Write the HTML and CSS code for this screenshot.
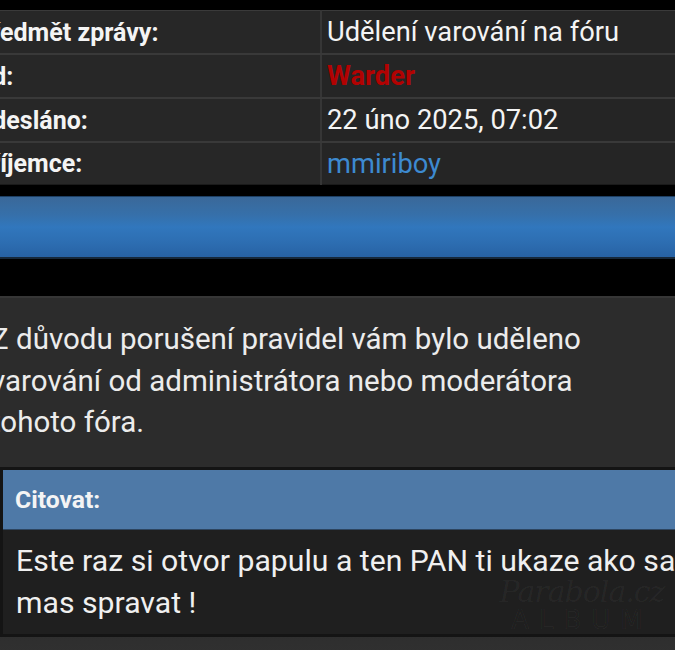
FILE: index.html
```html
<!DOCTYPE html>
<html lang="cs">
<head>
<meta charset="utf-8">
<title>Soukromá zpráva</title>
<link rel="stylesheet" href="styles.css">
</head>
<body>
<div class="page">
  <table class="pm-info">
    <tr>
      <th>Předmět zprávy:</th>
      <td>Udělení varování na fóru</td>
    </tr>
    <tr>
      <th>Od:</th>
      <td><span class="user-admin">Warder</span></td>
    </tr>
    <tr>
      <th>Odesláno:</th>
      <td>22 úno 2025, 07:02</td>
    </tr>
    <tr>
      <th>Příjemce:</th>
      <td><span class="user-link">mmiriboy</span></td>
    </tr>
  </table>

  <div class="cat-bar"></div>

  <div class="post">
    <p class="post-text">Z důvodu porušení pravidel vám bylo uděleno varování od administrátora nebo moderátora tohoto fóra.</p>
    <div class="quote">
      <div class="quote-head">Citovat:</div>
      <div class="quote-body">
        <p>Este raz si otvor papulu a ten PAN ti ukaze ako sa mas spravat !</p>
        <div class="watermark">
          <span class="wm-script">Parabola.cz</span>
          <span class="wm-album">ALBUM</span>
        </div>
      </div>
    </div>
  </div>
</div>
</body>
</html>
```

FILE: styles.css
```css
html, body {
  margin: 0;
  padding: 0;
  background: #000;
  overflow: hidden;
}

body {
  font-family: Roboto, "Liberation Sans", sans-serif;
  color: #f2f2f2;
}

.page {
  margin-left: -30px;
  width: 760px;
  padding-top: 10px;
}

.pm-info {
  width: 100%;
  border-collapse: collapse;
  border-top: 1px solid #3a3a3a;
}

.pm-info th,
.pm-info td {
  height: 42px;
  padding: 0;
  border-bottom: 2px solid #393939;
  background: #272727;
  vertical-align: middle;
  text-align: left;
}

.pm-info tr:last-child th,
.pm-info tr:last-child td {
  border-bottom: 1px solid #1a1a1a;
  height: 41px;
}

.pm-info th {
  width: 345px;
  padding-left: 5px;
  font-size: 25px;
  font-weight: 700;
  color: #f4f4f4;
  border-right: 2px solid #363636;
}

.pm-info td {
  padding-left: 5px;
  font-size: 27.3px;
  font-weight: 400;
  color: #f4f4f4;
  background: #252525;
}

.user-admin {
  color: #b20202;
  font-weight: 700;
}

.user-link {
  color: #3d8ad0;
}

.cat-bar {
  margin-top: 11px;
  height: 60px;
  border-top: 1px solid #1d3f63;
  border-bottom: 2px solid #16283a;
  background: linear-gradient(to bottom, #3a6899 0%, #3670aa 30%, #3177bd 50%, #2d6eb2 75%, #2762a4 100%);
}

.post {
  margin-top: 37px;
  border-top: 2px solid #363636;
  padding: 21px 0 14px 21px;
  background: linear-gradient(to bottom, #2c2c2c 0%, #2c2c2c 70%, #363636 100%);
  min-height: 400px;
}

.post-text {
  margin: 0;
  max-width: 616px;
  font-size: 29.5px;
  line-height: 41.5px;
  color: #ececec;
}

.quote {
  margin: 23px 0 0 9px;
  border: 3px solid #141414;
  border-right: none;
  background: #1f1f1f;
}

.quote-head {
  height: 59px;
  display: flex;
  align-items: center;
  padding-left: 12px;
  background: #4e79a7;
  border-bottom: 1px solid #2d4560;
  font-size: 24.7px;
  font-weight: 700;
  color: #f4f4f4;
}

.quote-body {
  position: relative;
  padding: 10px 0 10px 13px;
}

.quote-body p {
  margin: 0;
  max-width: 680px;
  font-size: 30.2px;
  line-height: 42px;
  color: #f0f0f0;
}

.watermark {
  position: absolute;
  left: 484px;
  top: 46px;
  width: 190px;
  display: flex;
  flex-direction: column;
  align-items: center;
  pointer-events: none;
  color: rgba(255, 255, 255, 0.04);
}

.wm-script {
  font-family: "DejaVu Serif", serif;
  font-style: italic;
  font-size: 30px;
  line-height: 32px;
  letter-spacing: -1px;
}

.wm-album {
  font-family: "DejaVu Sans", sans-serif;
  font-size: 26px;
  line-height: 24px;
  letter-spacing: 10px;
  color: transparent;
  -webkit-text-stroke: 1px rgba(255, 255, 255, 0.035);
}
```
